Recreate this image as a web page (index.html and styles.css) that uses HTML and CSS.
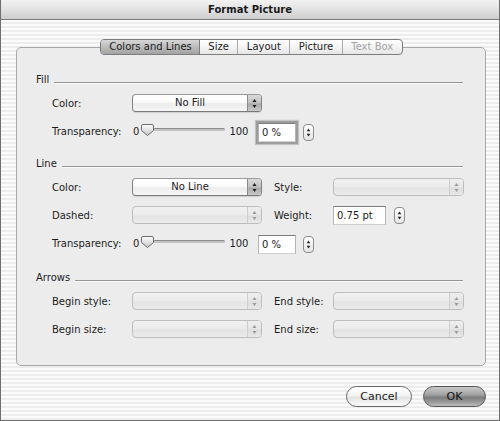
FILE: index.html
```html
<!DOCTYPE html>
<html>
<head>
<meta charset="utf-8">
<title>Format Picture</title>
<link rel="stylesheet" href="styles.css">
</head>
<body>
<div class="window">
  <div class="titlebar">Format Picture</div>
  <div class="content">
    <div class="tabs">
      <span class="tab selected">Colors and Lines</span>
      <span class="tab">Size</span>
      <span class="tab">Layout</span>
      <span class="tab">Picture</span>
      <span class="tab disabled">Text Box</span>
    </div>
    <div class="panel">
      <section class="group">
        <div class="ghead"><span>Fill</span><i class="rule"></i></div>
        <div class="row">
          <span class="lbl">Color:</span>
          <div class="popup"><span class="ptext">No Fill</span><span class="parrow"><svg width="13" height="16" viewBox="0 0 13 16"><polygon points="4.5,7 8.5,7 6.5,4"/><polygon points="4.5,10 8.5,10 6.5,13"/></svg></span></div>
        </div>
        <div class="row">
          <span class="lbl">Transparency:</span>
          <div class="slider">
            <span class="smin">0</span>
            <div class="track"><i class="bar"></i><svg class="thumb" width="13" height="12" viewBox="0 0 13 12"><defs><linearGradient id="tg" x1="0" y1="0" x2="0" y2="1"><stop offset="0" stop-color="#ffffff"/><stop offset="1" stop-color="#c4c4c4"/></linearGradient></defs><path d="M2 0.5 H11 A1.5 1.5 0 0 1 12.5 2 V6.5 L6.5 11.5 L0.5 6.5 V2 A1.5 1.5 0 0 1 2 0.5 Z" fill="url(#tg)" stroke="#6e6e6e"/></svg></div>
            <span class="smax">100</span>
          </div>
          <div class="textbox focus">0 %</div>
          <div class="stepper"><svg width="10" height="17" viewBox="0 0 10 17"><polygon points="3,7 7,7 5,4"/><polygon points="3,10 7,10 5,13"/></svg></div>
        </div>
      </section>

      <section class="group g-line">
        <div class="ghead"><span>Line</span><i class="rule"></i></div>
        <div class="row">
          <span class="lbl">Color:</span>
          <div class="popup"><span class="ptext">No Line</span><span class="parrow"><svg width="13" height="16" viewBox="0 0 13 16"><polygon points="4.5,7 8.5,7 6.5,4"/><polygon points="4.5,10 8.5,10 6.5,13"/></svg></span></div>
          <span class="lbl2">Style:</span>
          <div class="popup wide disabled"><span class="ptext"></span><span class="parrow"><svg width="13" height="16" viewBox="0 0 13 16"><polygon points="4.5,7 8.5,7 6.5,4"/><polygon points="4.5,10 8.5,10 6.5,13"/></svg></span></div>
        </div>
        <div class="row">
          <span class="lbl">Dashed:</span>
          <div class="popup disabled"><span class="ptext"></span><span class="parrow"><svg width="13" height="16" viewBox="0 0 13 16"><polygon points="4.5,7 8.5,7 6.5,4"/><polygon points="4.5,10 8.5,10 6.5,13"/></svg></span></div>
          <span class="lbl2">Weight:</span>
          <div class="textbox weight">0.75 pt</div>
          <div class="stepper"><svg width="10" height="17" viewBox="0 0 10 17"><polygon points="3,7 7,7 5,4"/><polygon points="3,10 7,10 5,13"/></svg></div>
        </div>
        <div class="row">
          <span class="lbl">Transparency:</span>
          <div class="slider">
            <span class="smin">0</span>
            <div class="track"><i class="bar"></i><svg class="thumb" width="13" height="12" viewBox="0 0 13 12"><path d="M2 0.5 H11 A1.5 1.5 0 0 1 12.5 2 V6.5 L6.5 11.5 L0.5 6.5 V2 A1.5 1.5 0 0 1 2 0.5 Z" fill="url(#tg)" stroke="#6e6e6e"/></svg></div>
            <span class="smax">100</span>
          </div>
          <div class="textbox">0 %</div>
          <div class="stepper"><svg width="10" height="17" viewBox="0 0 10 17"><polygon points="3,7 7,7 5,4"/><polygon points="3,10 7,10 5,13"/></svg></div>
        </div>
      </section>

      <section class="group g-arrows">
        <div class="ghead"><span>Arrows</span><i class="rule"></i></div>
        <div class="row">
          <span class="lbl">Begin style:</span>
          <div class="popup disabled"><span class="ptext"></span><span class="parrow"><svg width="13" height="16" viewBox="0 0 13 16"><polygon points="4.5,7 8.5,7 6.5,4"/><polygon points="4.5,10 8.5,10 6.5,13"/></svg></span></div>
          <span class="lbl2">End style:</span>
          <div class="popup wide disabled"><span class="ptext"></span><span class="parrow"><svg width="13" height="16" viewBox="0 0 13 16"><polygon points="4.5,7 8.5,7 6.5,4"/><polygon points="4.5,10 8.5,10 6.5,13"/></svg></span></div>
        </div>
        <div class="row">
          <span class="lbl">Begin size:</span>
          <div class="popup disabled"><span class="ptext"></span><span class="parrow"><svg width="13" height="16" viewBox="0 0 13 16"><polygon points="4.5,7 8.5,7 6.5,4"/><polygon points="4.5,10 8.5,10 6.5,13"/></svg></span></div>
          <span class="lbl2">End size:</span>
          <div class="popup wide disabled"><span class="ptext"></span><span class="parrow"><svg width="13" height="16" viewBox="0 0 13 16"><polygon points="4.5,7 8.5,7 6.5,4"/><polygon points="4.5,10 8.5,10 6.5,13"/></svg></span></div>
        </div>
      </section>
    </div>
    <div class="buttons">
      <div class="btn cancel">Cancel</div>
      <div class="btn ok">OK</div>
    </div>
  </div>
</div>
</body>
</html>
```
FILE: styles.css
```css
* { box-sizing: border-box; }
html, body { margin: 0; padding: 0; }
body {
  width: 500px;
  height: 421px;
  overflow: hidden;
  font-family: "DejaVu Sans", "Verdana", sans-serif;
  font-size: 10px;
  color: #1c1c1c;
  background: #ffffff;
}
.window {
  width: 500px;
  height: 421px;
  border: 1px solid #6f6f6f;
  border-top: none;
  background: repeating-linear-gradient(to bottom, #fbfbfb 0, #fbfbfb 2px, #ededed 2px, #ededed 4px);
  display: flex;
  flex-direction: column;
}
.titlebar {
  height: 20px;
  flex: none;
  border-bottom: 1px solid #7c7c7c;
  background: linear-gradient(to bottom, #f2f2f2 0%, #e2e2e2 50%, #cdcdcd 100%);
  text-align: center;
  font-weight: bold;
  font-size: 10px;
  line-height: 19px;
  color: #1a1a1a;
}
.content {
  padding: 19px 13px 0 15px;
  display: flex;
  flex-direction: column;
}
.tabs {
  position: relative;
  z-index: 1;
  align-self: center;
  margin-left: 1px;
  display: flex;
  height: 16px;
  margin-bottom: -8px;
  border: 1px solid #7d7d7d;
  border-radius: 4px;
  overflow: hidden;
  background: linear-gradient(to bottom, #ffffff 0%, #f4f4f4 50%, #e6e6e6 100%);
}
.tab {
  padding: 0 8.5px;
  line-height: 14px;
  border-left: 1px solid #a9a9a9;
  white-space: nowrap;
}
.tab:first-child { border-left: none; }
.tab.selected {
  padding: 0 7px 0 8px;
  background: linear-gradient(to bottom, #d6d6d6 0%, #bdbdbd 50%, #a2a2a2 100%);
  border-right: 1px solid #7d7d7d;
}
.tab.selected + .tab { border-left: none; }
.tab.disabled { color: #a3a3a3; }
.panel {
  width: 470px;
  height: 319px;
  border: 1px solid #a9a9a9;
  border-radius: 5px;
  background: #ececec;
  padding-top: 24px;
}
.group { display: flex; flex-direction: column; }
.g-line { margin-top: 16px; }
.g-arrows { margin-top: 18px; }
.ghead {
  display: flex;
  align-items: center;
  height: 14px;
  padding: 0 22px 0 19px;
  margin-bottom: -2px;
}
.rule {
  flex: 1;
  height: 1px;
  margin-left: 5px;
  margin-top: 6px;
  background: #969696;
  box-shadow: 0 1px 0 #fafafa;
}
.row {
  display: flex;
  align-items: center;
  height: 18px;
  padding-left: 35px;
  margin-top: 10px;
}
.lbl { width: 80px; flex: none; }
.lbl2 { width: 59px; flex: none; margin-left: 12px; }
.popup {
  width: 130px;
  height: 18px;
  flex: none;
  display: flex;
  border: 1px solid #858585;
  border-top-color: #9a9a9a;
  border-bottom-color: #7a7a7a;
  border-radius: 4px;
  overflow: hidden;
  background: linear-gradient(to bottom, #ffffff 0%, #fbfbfb 45%, #ececec 55%, #f6f6f6 100%);
  box-shadow: 0 1px 1px rgba(0,0,0,0.12);
}
.popup.wide { width: 131px; }
.ptext {
  flex: 1;
  text-align: center;
  line-height: 16px;
}
.parrow {
  width: 14px;
  flex: none;
  border-left: 1px solid #8a8a8a;
  background: linear-gradient(to bottom, #d9d9d9 0%, #c2c2c2 50%, #a9a9a9 55%, #c9c9c9 100%);
  display: flex;
  align-items: center;
  justify-content: center;
}
.parrow svg { display: block; fill: #1c1c1c; }
.popup.disabled {
  border-color: #bdbdbd;
  background: linear-gradient(to bottom, #f1f1f1 0%, #ebebeb 50%, #e3e3e3 55%, #ebebeb 100%);
  box-shadow: none;
}
.popup.disabled .parrow {
  border-left-color: #cfcfcf;
  background: linear-gradient(to bottom, #eeeeee 0%, #e6e6e6 50%, #dedede 55%, #e8e8e8 100%);
}
.popup.disabled .parrow svg { fill: #9a9a9a; }
.slider {
  width: 126px;
  flex: none;
  display: flex;
  align-items: center;
  line-height: 18px;
  margin-top: 2px;
}
.smin { margin-left: 1px; }
.track {
  position: relative;
  width: 84px;
  height: 18px;
  margin-left: 2px;
  flex: none;
}
.bar {
  position: absolute;
  left: 2px;
  right: 0;
  top: 5px;
  height: 3px;
  border-radius: 2px;
  background: #c2c2c2;
  border-top: 1px solid #8c8c8c;
}
.thumb {
  position: absolute;
  left: 0;
  top: 1px;
}
.smax { margin-left: 4px; }
.textbox {
  width: 38px;
  height: 19px;
  flex: none;
  margin-left: 0;
  margin-top: 2px;
  background: #ffffff;
  border: 1px solid #b4b4b4;
  border-top-color: #7c7c7c;
  border-bottom-color: #d0d0d0;
  padding-left: 3px;
  line-height: 17px;
}
.textbox.focus {
  box-shadow: 0 0 0 2px #9c9c9c, 0 0 1px 3px #c4c4c4;
}
.textbox.weight {
  width: 53px;
  margin-top: 0;
}
.stepper {
  width: 11px;
  height: 17px;
  flex: none;
  margin-left: 7px;
  margin-top: 2px;
  border: 1px solid #8c8c8c;
  border-radius: 4px;
  background: linear-gradient(to bottom, #ffffff 0%, #f2f2f2 50%, #e4e4e4 100%);
  display: flex;
  align-items: center;
  justify-content: center;
}
.textbox.weight + .stepper { margin-left: 8px; margin-top: 0; }
.stepper svg { display: block; fill: #222; }
.buttons {
  display: flex;
  justify-content: flex-end;
  margin-top: 20px;
  gap: 11px;
}
.btn {
  height: 21px;
  border-radius: 11px;
  font-size: 11px;
  line-height: 19px;
  text-align: center;
  border: 1px solid #676767;
}
.cancel {
  width: 66px;
  background: linear-gradient(to bottom, #ffffff 0%, #f3f3f3 45%, #e4e4e4 55%, #fbfbfb 100%);
}
.ok {
  width: 63px;
  border-color: #555555;
  background: linear-gradient(to bottom, #c9c9c9 0%, #a3a3a3 40%, #7d7d7d 55%, #9a9a9a 80%, #bdbdbd 100%);
  color: #111;
}
```
